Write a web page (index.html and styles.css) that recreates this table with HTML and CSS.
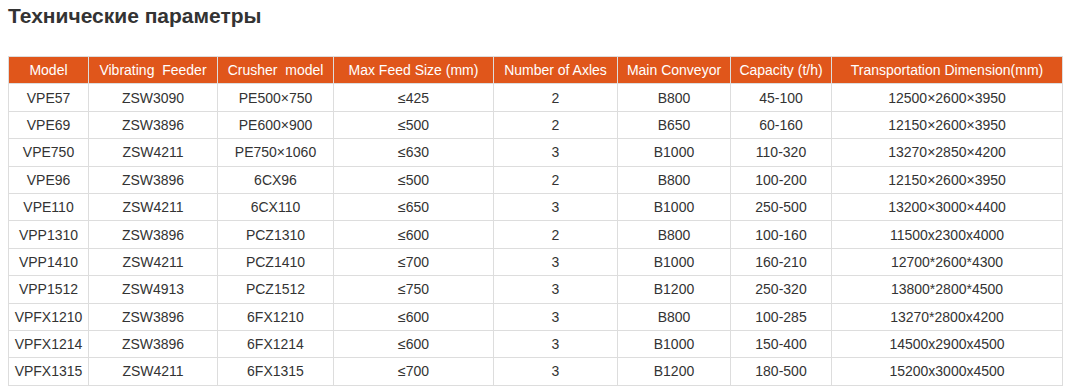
FILE: index.html
```html
<!DOCTYPE html>
<html lang="en">
<head>
    <meta charset="UTF-8">
    <meta name="viewport" content="width=device-width, initial-scale=1.0">
    <title>Технические параметры</title>
    <link rel="stylesheet" href="styles.css">
</head>
<body>
<div class="page">
    <h2 class="title">Технические параметры</h2>

    <table class="specs">
        <colgroup>
            <col class="c-model">
            <col class="c-feeder">
            <col class="c-crusher">
            <col class="c-feed">
            <col class="c-axles">
            <col class="c-conveyor">
            <col class="c-capacity">
            <col class="c-dim">
        </colgroup>
        <thead>
            <tr>
                <th>Model</th>
                <th>Vibrating&nbsp; Feeder</th>
                <th>Crusher&nbsp; model</th>
                <th>Max Feed Size (mm)</th>
                <th>Number of Axles</th>
                <th>Main Conveyor</th>
                <th>Capacity (t/h)</th>
                <th>Transportation Dimension(mm)</th>
            </tr>
        </thead>
        <tbody>
            <tr><td>VPE57</td><td>ZSW3090</td><td>PE500×750</td><td>≤425</td><td>2</td><td>B800</td><td>45-100</td><td>12500×2600×3950</td></tr>
            <tr><td>VPE69</td><td>ZSW3896</td><td>PE600×900</td><td>≤500</td><td>2</td><td>B650</td><td>60-160</td><td>12150×2600×3950</td></tr>
            <tr><td>VPE750</td><td>ZSW4211</td><td>PE750×1060</td><td>≤630</td><td>3</td><td>B1000</td><td>110-320</td><td>13270×2850×4200</td></tr>
            <tr><td>VPE96</td><td>ZSW3896</td><td>6CX96</td><td>≤500</td><td>2</td><td>B800</td><td>100-200</td><td>12150×2600×3950</td></tr>
            <tr><td>VPE110</td><td>ZSW4211</td><td>6CX110</td><td>≤650</td><td>3</td><td>B1000</td><td>250-500</td><td>13200×3000×4400</td></tr>
            <tr><td>VPP1310</td><td>ZSW3896</td><td>PCZ1310</td><td>≤600</td><td>2</td><td>B800</td><td>100-160</td><td>11500x2300x4000</td></tr>
            <tr><td>VPP1410</td><td>ZSW4211</td><td>PCZ1410</td><td>≤700</td><td>3</td><td>B1000</td><td>160-210</td><td>12700*2600*4300</td></tr>
            <tr><td>VPP1512</td><td>ZSW4913</td><td>PCZ1512</td><td>≤750</td><td>3</td><td>B1200</td><td>250-320</td><td>13800*2800*4500</td></tr>
            <tr><td>VPFX1210</td><td>ZSW3896</td><td>6FX1210</td><td>≤600</td><td>3</td><td>B800</td><td>100-285</td><td>13270*2800x4200</td></tr>
            <tr><td>VPFX1214</td><td>ZSW3896</td><td>6FX1214</td><td>≤600</td><td>3</td><td>B1000</td><td>150-400</td><td>14500x2900x4500</td></tr>
            <tr><td>VPFX1315</td><td>ZSW4211</td><td>6FX1315</td><td>≤700</td><td>3</td><td>B1200</td><td>180-500</td><td>15200x3000x4500</td></tr>
        </tbody>
    </table>
</div>
</body>
</html>
```

FILE: styles.css
```css
/* spec table page */

body {
    margin: 0;
    padding: 0;
    background-color: #fff;
    font-family: "Liberation Sans", Arial, sans-serif;
    color: #333;
}
.page {
    padding: 6px 8px;
}
.title {
    margin: 0 0 30px 0;
    font-size: 21px;
    line-height: 20px;
    font-weight: bold;
    color: #333;
}
.specs {
    width: 1054px;
    border-collapse: collapse;
    table-layout: fixed;
    font-size: 14px;
}
.specs th, .specs td {
    border: 1px solid #ddd;
    height: 27.4px;
    padding: 0 4px;
    line-height: 18px;
    text-align: center;
    white-space: nowrap;
    box-sizing: border-box;
}
.specs th {
    background-color: #e0561b;
    color: #fff;
    font-weight: normal;
}
.c-model { width: 80px; }
.c-feeder { width: 129px; }
.c-crusher { width: 116px; }
.c-feed { width: 160px; }
.c-axles { width: 124px; }
.c-conveyor { width: 113px; }
.c-capacity { width: 101px; }
.c-dim { width: 231px; }
```
